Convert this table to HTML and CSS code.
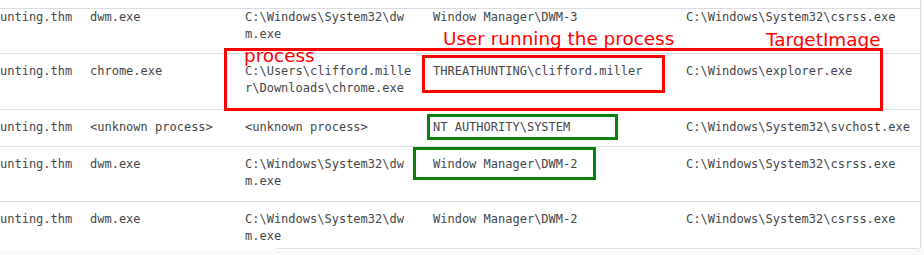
FILE: index.html
```html
<!DOCTYPE html>
<html lang="en">
<head>
  <meta charset="UTF-8" />
  <meta name="viewport" content="width=device-width, initial-scale=1.0"/>
  <title>Process Events</title>
  <link rel="stylesheet" href="styles.css">
</head>
<body>
  <div class="page">
    <div class="results-card">
      <table class="results">
        <colgroup>
          <col class="col-host">
          <col class="col-image">
          <col class="col-path">
          <col class="col-user">
          <col class="col-target">
        </colgroup>
        <tbody>
          <tr class="row-first">
            <td>unting.thm</td>
            <td>dwm.exe</td>
            <td>C:\Windows\System32\dw<br>m.exe</td>
            <td>Window Manager\DWM-3</td>
            <td>C:\Windows\System32\csrss.exe</td>
          </tr>
          <tr class="row-tall">
            <td>unting.thm</td>
            <td>chrome.exe</td>
            <td>C:\Users\clifford.mille<br>r\Downloads\chrome.exe</td>
            <td>THREATHUNTING\clifford.miller</td>
            <td>C:\Windows\explorer.exe</td>
          </tr>
          <tr class="row-short">
            <td>unting.thm</td>
            <td>&lt;unknown process&gt;</td>
            <td>&lt;unknown process&gt;</td>
            <td>NT AUTHORITY\SYSTEM</td>
            <td>C:\Windows\System32\svchost.exe</td>
          </tr>
          <tr>
            <td>unting.thm</td>
            <td>dwm.exe</td>
            <td>C:\Windows\System32\dw<br>m.exe</td>
            <td>Window Manager\DWM-2</td>
            <td>C:\Windows\System32\csrss.exe</td>
          </tr>
          <tr class="row-last">
            <td>unting.thm</td>
            <td>dwm.exe</td>
            <td>C:\Windows\System32\dw<br>m.exe</td>
            <td>Window Manager\DWM-2</td>
            <td>C:\Windows\System32\csrss.exe</td>
          </tr>
        </tbody>
      </table>
      <div class="scroll-edge"></div>
    </div>

    <!-- annotations drawn over the table -->
    <div class="mark red big-box"></div>
    <div class="mark red user-box"></div>
    <div class="mark green system-box"></div>
    <div class="mark green dwm-box"></div>
    <div class="note note-user">User running the process</div>
    <div class="note note-process">process</div>
    <div class="note note-target">TargetImage</div>
  </div>
</body>
</html>
```

FILE: styles.css
```css
* {
  margin: 0;
  padding: 0;
  box-sizing: border-box;
}

body {
  background: #f8f9fa;
  overflow: hidden;
}

.page {
  position: relative;
  width: 924px;
  height: 255px;
  overflow: hidden;
}

.results-card {
  position: relative;
  width: 921px;
  height: 250px;
  background: white;
  border-right: 1px solid #dadce0;
  border-bottom-right-radius: 4px;
  padding-top: 8px;
  overflow: hidden;
}

.results {
  width: 920px;
  table-layout: fixed;
  border-collapse: collapse;
  font-family: "DejaVu Sans Mono", monospace;
  font-size: 12px;
  line-height: 17px;
  color: #44474a;
}

.col-host { width: 90px; }
.col-image { width: 155px; }
.col-path { width: 188px; }
.col-user { width: 253px; }
.col-target { width: 234px; }

.results td {
  vertical-align: top;
  white-space: nowrap;
  border-top: 1px solid #dadce0;
  padding: 9px 0 11px;
}

.results .row-first td {
  padding: 0 0 10px;
}

.results .row-tall td {
  padding-bottom: 12px;
}

.results .row-short td {
  padding-bottom: 10px;
}

.results .row-last td {
  padding-bottom: 4px;
}

.scroll-edge {
  position: absolute;
  left: 277px;
  right: 2px;
  bottom: 1px;
  height: 1px;
  background: #dadce0;
}

.mark {
  position: absolute;
  border: 3px solid;
}

.red { border-color: #ff0000; }
.green { border-color: #0a800a; }

.big-box { left: 224px; top: 48px; width: 659px; height: 63px; }
.user-box { left: 422px; top: 55px; width: 243px; height: 38px; }
.system-box { left: 427px; top: 114px; width: 191px; height: 26px; }
.dwm-box { left: 413px; top: 147px; width: 183px; height: 33px; }

.note {
  position: absolute;
  font-family: "DejaVu Sans", sans-serif;
  font-size: 18.4px;
  line-height: 18px;
  color: #ff0000;
  white-space: nowrap;
}

.note-user { left: 443px; top: 30px; }
.note-process { left: 244px; top: 47px; }
.note-target { left: 766px; top: 31px; }
```
